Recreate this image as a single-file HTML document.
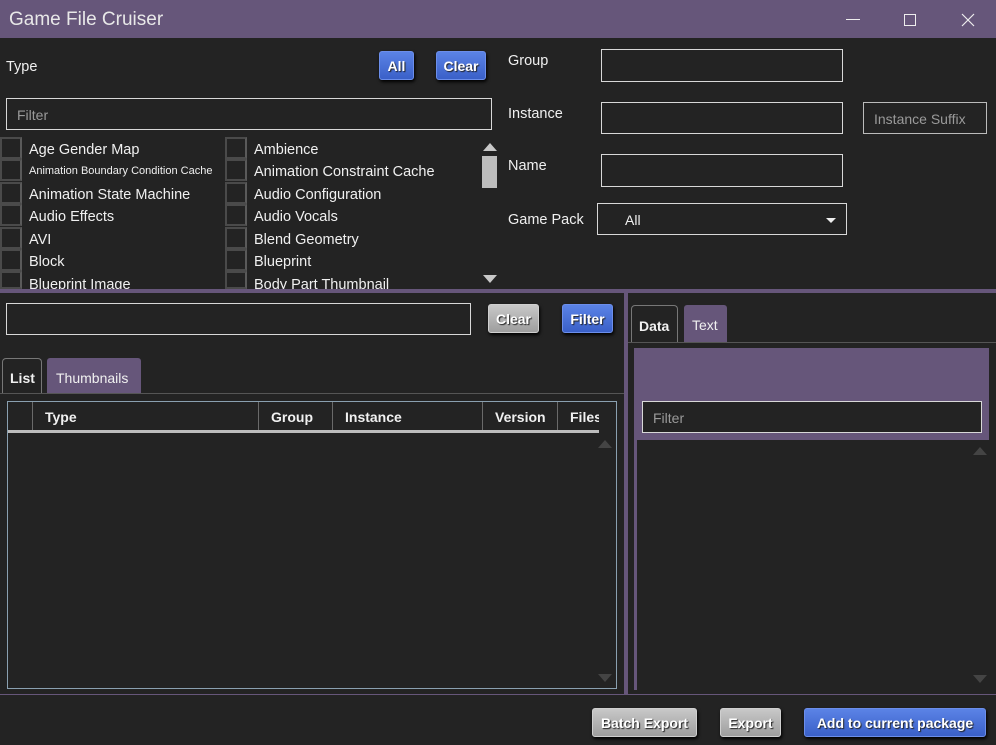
<!DOCTYPE html>
<html><head><meta charset="utf-8"><style>
*{box-sizing:border-box;margin:0;padding:0}
body{width:996px;height:745px;background:#232323;position:relative;overflow:hidden;font-family:"Liberation Sans",sans-serif;color:#f0f0f0;font-size:14px}
.a{position:absolute}
.inp{position:absolute;border:1px solid #d8d8d8;background:#232323}
.ph{color:#9a9a9a;font-size:14px}
.btn{position:absolute;border-radius:3px;font-weight:bold;font-size:14px;text-align:center;color:#fff;text-shadow:1px 1px 1px #222;box-shadow:1px 2px 3px #000}
.blue{background:linear-gradient(#5b83e6,#3a60c8);border:1px solid #6c8eea}
.gray{background:linear-gradient(#c8c8c8,#9e9e9e);border:1px solid #cfcfcf}
.cb{position:absolute;width:22px;height:22px;border:2px solid #4a4a4a;border-right-color:#5a5a5a}
.lbl{position:absolute;font-size:14.5px;white-space:nowrap}
.tri-up{position:absolute;width:0;height:0;border-left:7px solid transparent;border-right:7px solid transparent;border-bottom:8px solid #c8c8c8}
.tri-dn{position:absolute;width:0;height:0;border-left:7px solid transparent;border-right:7px solid transparent;border-top:8px solid #c8c8c8}
.th{position:absolute;top:0;height:28px;border-left:1px solid #6a6a6a;font-weight:bold;font-size:14px;line-height:30px;padding-left:12px}
</style></head><body>
<div class="a" style="left:0;top:0;width:996px;height:38px;background:#66567a"></div>
<div class="a" style="left:9px;top:9px;font-size:19px;color:#e8e8e8">Game File Cruiser</div>
<div class="a" style="left:846px;top:19px;width:14px;height:1px;background:#eee"></div>
<div class="a" style="left:904px;top:14px;width:12px;height:12px;border:1px solid #eee"></div>
<svg class="a" style="left:961px;top:13px" width="14" height="14"><path d="M1 1L13 13M13 1L1 13" stroke="#eee" stroke-width="1.2"/></svg>

<div class="a" style="left:6px;top:59px;font-size:14.5px">Type</div>
<div class="btn blue" style="left:379px;top:51px;width:35px;height:29px;line-height:29px">All</div>
<div class="btn blue" style="left:436px;top:51px;width:50px;height:29px;line-height:29px">Clear</div>
<div class="inp" style="left:6px;top:98px;width:486px;height:32px"><span class="ph a" style="left:10px;top:8px">Filter</span></div>

<div class="cb" style="left:0;top:137px"></div><div class="lbl" style="left:29px;top:142px">Age Gender Map</div>
<div class="cb" style="left:0;top:159px"></div><div class="lbl" style="left:29px;top:165px;font-size:11px">Animation Boundary Condition Cache</div>
<div class="cb" style="left:0;top:182px"></div><div class="lbl" style="left:29px;top:187px">Animation State Machine</div>
<div class="cb" style="left:0;top:204px"></div><div class="lbl" style="left:29px;top:209px">Audio Effects</div>
<div class="cb" style="left:0;top:227px"></div><div class="lbl" style="left:29px;top:232px">AVI</div>
<div class="cb" style="left:0;top:249px"></div><div class="lbl" style="left:29px;top:254px">Block</div>
<div class="cb" style="left:0;top:271px;height:18px"></div><div class="lbl" style="left:29px;top:277px;height:12px;overflow:hidden">Blueprint Image</div>
<div class="cb" style="left:225px;top:137px"></div><div class="lbl" style="left:254px;top:142px">Ambience</div>
<div class="cb" style="left:225px;top:159px"></div><div class="lbl" style="left:254px;top:164px">Animation Constraint Cache</div>
<div class="cb" style="left:225px;top:182px"></div><div class="lbl" style="left:254px;top:187px">Audio Configuration</div>
<div class="cb" style="left:225px;top:204px"></div><div class="lbl" style="left:254px;top:209px">Audio Vocals</div>
<div class="cb" style="left:225px;top:227px"></div><div class="lbl" style="left:254px;top:232px">Blend Geometry</div>
<div class="cb" style="left:225px;top:249px"></div><div class="lbl" style="left:254px;top:254px">Blueprint</div>
<div class="cb" style="left:225px;top:271px;height:18px"></div><div class="lbl" style="left:254px;top:277px;height:12px;overflow:hidden">Body Part Thumbnail</div>
<div class="tri-up" style="left:483px;top:143px"></div>
<div class="a" style="left:482px;top:156px;width:15px;height:32px;background:#bdbdbd"></div>
<div class="tri-dn" style="left:483px;top:275px"></div>

<div class="a" style="left:508px;top:53px;font-size:14.5px">Group</div>
<div class="inp" style="left:601px;top:49px;width:242px;height:33px"></div>
<div class="a" style="left:508px;top:106px;font-size:14.5px">Instance</div>
<div class="inp" style="left:601px;top:102px;width:242px;height:32px"></div>
<div class="inp" style="left:863px;top:102px;width:124px;height:32px;border-color:#bbb"><span class="ph a" style="left:10px;top:8px">Instance Suffix</span></div>
<div class="a" style="left:508px;top:158px;font-size:14.5px">Name</div>
<div class="inp" style="left:601px;top:154px;width:242px;height:33px"></div>
<div class="a" style="left:508px;top:212px;font-size:14.5px">Game Pack</div>
<div class="inp" style="left:597px;top:203px;width:250px;height:32px"><span class="a" style="left:27px;top:8px">All</span><div class="a" style="left:228px;top:14px;border-left:5px solid transparent;border-right:5px solid transparent;border-top:5px solid #eee"></div></div>

<div class="a" style="left:0;top:289px;width:996px;height:4px;background:#66567a"></div>
<div class="a" style="left:624px;top:293px;width:4px;height:402px;background:#66567a"></div>
<div class="a" style="left:0;top:694px;width:996px;height:1px;background:#66567a"></div>

<div class="inp" style="left:6px;top:303px;width:465px;height:32px"></div>
<div class="btn gray" style="left:488px;top:304px;width:51px;height:29px;line-height:29px">Clear</div>
<div class="btn blue" style="left:562px;top:304px;width:51px;height:29px;line-height:29px">Filter</div>

<div class="a" style="left:2px;top:358px;width:40px;height:36px;border:1px solid #777;border-bottom:none;border-radius:4px 4px 0 0;background:#232323"></div>
<div class="a" style="left:10px;top:370px;font-weight:bold">List</div>
<div class="a" style="left:47px;top:358px;width:94px;height:36px;background:#66567a;border-radius:3px 3px 0 0"></div>
<div class="a" style="left:56px;top:370px">Thumbnails</div>
<div class="a" style="left:0;top:393px;width:624px;height:1px;background:#555"></div>
<div class="a" style="left:7px;top:401px;width:610px;height:288px;border:1px solid #8aa0b0">
 <div class="th" style="left:24px;width:226px">Type</div>
 <div class="th" style="left:250px;width:74px">Group</div>
 <div class="th" style="left:324px;width:150px">Instance</div>
 <div class="th" style="left:474px;width:75px">Version</div>
 <div class="th" style="left:549px;width:42px;overflow:hidden">Files</div>
 <div class="a" style="left:0;top:28px;width:591px;height:3px;background:#bdbdbd"></div>
 <div class="tri-up" style="left:590px;top:38px;border-bottom-color:#444"></div>
 <div class="tri-dn" style="left:590px;top:272px;border-top-color:#444"></div>
</div>

<div class="a" style="left:631px;top:305px;width:47px;height:38px;border:1px solid #777;border-bottom:none;border-radius:4px 4px 0 0"></div>
<div class="a" style="left:639px;top:318px;font-weight:bold">Data</div>
<div class="a" style="left:684px;top:305px;width:43px;height:38px;background:#66567a;border-radius:3px 3px 0 0"></div>
<div class="a" style="left:692px;top:317px">Text</div>
<div class="a" style="left:628px;top:342px;width:368px;height:1px;background:#555"></div>
<div class="a" style="left:634px;top:348px;width:355px;height:92px;background:#66567a"></div>
<div class="inp" style="left:642px;top:401px;width:340px;height:32px;background:#232323"><span class="ph a" style="left:10px;top:8px">Filter</span></div>
<div class="a" style="left:634px;top:440px;width:3px;height:250px;background:#66567a"></div>
<div class="tri-up" style="left:973px;top:447px;border-bottom-color:#444"></div>
<div class="tri-dn" style="left:973px;top:675px;border-top-color:#444"></div>

<div class="btn gray" style="left:592px;top:708px;width:105px;height:29px;line-height:29px">Batch Export</div>
<div class="btn gray" style="left:720px;top:708px;width:61px;height:29px;line-height:29px">Export</div>
<div class="btn blue" style="left:804px;top:708px;width:182px;height:29px;line-height:29px">Add to current package</div>
</body></html>
